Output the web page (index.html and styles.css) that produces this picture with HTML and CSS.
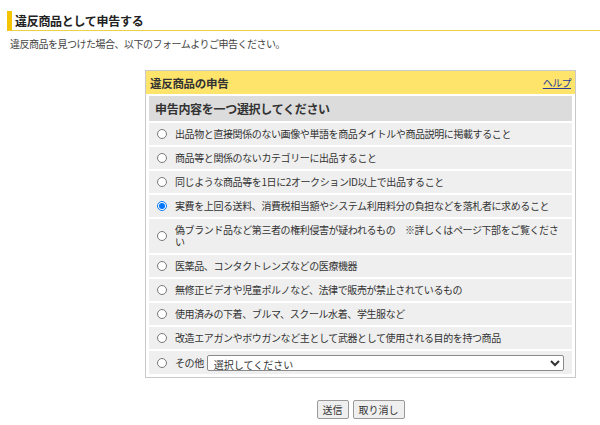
FILE: index.html
```html
<!DOCTYPE html>
<html lang="ja">
<head>
<meta charset="utf-8">
<title>違反商品として申告する</title>
<link rel="stylesheet" href="styles.css">
</head>
<body>
<div class="page">
  <h1 class="title">違反商品として申告する</h1>
  <p class="desc">違反商品を見つけた場合、以下のフォームよりご申告ください。</p>

  <form class="form">
    <div class="panel">
      <div class="panel-head">
        <span class="panel-title">違反商品の申告</span>
        <a class="help" href="#">ヘルプ</a>
      </div>
      <div class="panel-body">
        <div class="sub">申告内容を一つ選択してください</div>
        <label class="row"><input type="radio" name="r"><span>出品物と直接関係のない画像や単語を商品タイトルや商品説明に掲載すること</span></label>
        <label class="row"><input type="radio" name="r"><span>商品等と関係のないカテゴリーに出品すること</span></label>
        <label class="row"><input type="radio" name="r"><span>同じような商品等を1日に2オークションID以上で出品すること</span></label>
        <label class="row"><input type="radio" name="r" checked><span>実費を上回る送料、消費税相当額やシステム利用料分の負担などを落札者に求めること</span></label>
        <label class="row tall"><input type="radio" name="r"><span>偽ブランド品など第三者の権利侵害が疑われるもの　※詳しくはページ下部をご覧ください</span></label>
        <label class="row"><input type="radio" name="r"><span>医薬品、コンタクトレンズなどの医療機器</span></label>
        <label class="row"><input type="radio" name="r"><span>無修正ビデオや児童ポルノなど、法律で販売が禁止されているもの</span></label>
        <label class="row"><input type="radio" name="r"><span>使用済みの下着、ブルマ、スクール水着、学生服など</span></label>
        <label class="row"><input type="radio" name="r"><span>改造エアガンやボウガンなど主として武器として使用される目的を持つ商品</span></label>
        <div class="row last"><input type="radio" name="r"><span>その他</span>
          <select class="sel"><option>選択してください</option></select>
        </div>
      </div>
    </div>
    <div class="buttons">
      <button type="button" class="btn">送信</button>
      <button type="button" class="btn">取り消し</button>
    </div>
  </form>
</div>
</body>
</html>
```

FILE: styles.css
```css
html, body {
  margin: 0;
  padding: 0;
  background: #ffffff;
}

body {
  font-family: "Noto Sans CJK JP", "Noto Sans", sans-serif;
  color: #333333;
}

.page {
  padding: 11px 0 0 7px;
}

.title {
  margin: 0;
  height: 19px;
  line-height: 19px;
  padding-left: 3px;
  border-left: 5px solid #f5c400;
  border-bottom: 1px solid #e9d245;
  font-size: 12px;
  font-weight: bold;
  color: #222222;
  letter-spacing: -0.3px;
}

.desc {
  margin: 6px 0 0 3px;
  font-size: 10px;
  line-height: 14px;
  letter-spacing: -0.5px;
  color: #444444;
}

.form {
  margin: 19px 0 0 138px;
  width: 431px;
}

.panel {
  box-sizing: border-box;
  width: 431px;
  border: 1px solid #c9c9c9;
}

.panel-head {
  height: 23px;
  background: #ffe46c;
  display: flex;
  align-items: center;
  justify-content: space-between;
  padding: 0 4px;
}

.panel-title {
  font-size: 11.5px;
  font-weight: bold;
  color: #333333;
  letter-spacing: -0.3px;
}

.help {
  font-size: 10px;
  color: #2b3a9a;
  text-decoration: underline;
  letter-spacing: -0.6px;
}

.panel-body {
  padding: 2px 3px 3px 3px;
}

.sub {
  height: 25px;
  background: #dcdcdc;
  display: flex;
  align-items: center;
  padding-left: 6px;
  font-size: 12px;
  font-weight: bold;
  color: #333333;
  letter-spacing: -0.3px;
}

.row {
  margin-top: 2px;
  min-height: 22px;
  background: #efefef;
  display: flex;
  align-items: center;
  font-size: 10px;
  line-height: 12px;
  letter-spacing: -0.4px;
  color: #333333;
}

.row.tall {
  min-height: 34px;
}

.row.last {
  min-height: 23px;
}

.row input[type="radio"] {
  width: 10px;
  height: 10px;
  margin: 0 8px 0 8px;
  flex: none;
}

.row span {
  padding-right: 12px;
}

.row.last span {
  padding-right: 0;
}

.sel {
  margin-left: 3px;
  width: 357px;
  height: 16px;
  font-family: "Noto Sans CJK JP", "Noto Sans", sans-serif;
  font-size: 10px;
  padding: 0 2px;
  border: 1px solid #8a8a8a;
  border-radius: 2px;
  background: #ffffff;
  color: #333333;
}

.buttons {
  margin-top: 22px;
  display: flex;
  justify-content: center;
  gap: 4px;
}

.btn {
  height: 19px;
  padding: 0 5px;
  font-family: "Noto Sans CJK JP", "Noto Sans", sans-serif;
  font-size: 10px;
  line-height: 17px;
  color: #333333;
  background: #efefef;
  border: 1px solid #9a9a9a;
  border-radius: 2px;
}
```
